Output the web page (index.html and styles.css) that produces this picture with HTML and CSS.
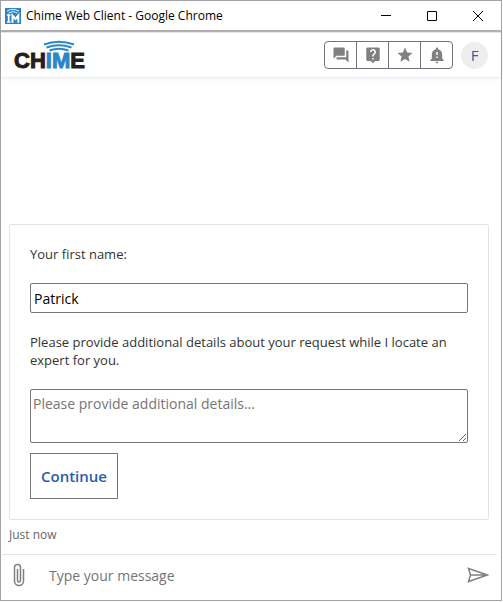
FILE: index.html
```html
<!DOCTYPE html>
<html lang="en">

<head>
    <meta charset="utf-8" />
    <meta name="viewport" content="width=device-width, initial-scale=1">
    <title>Chime Web Client</title>
    <link rel="stylesheet" href="styles.css">
</head>

<body>
    <div class="window">
        <div class="titlebar">
            <svg class="favicon" width="16" height="16" viewBox="0 0 16 16" aria-hidden="true">
                <rect width="16" height="16" fill="#2b83c6" />
                <g fill="none" stroke="#fff">
                    <path d="M2 3.2Q8 -.6 14 3.2" stroke-width=".9" />
                    <path d="M3.500 5Q8 2 12.500 5" stroke-width=".9" />
                    <path d="M2 7h3.500M3.700 7v7M2 14h3.500" stroke-width="1.700" />
                    <path d="M7.500 14.800V7.500l2.900 3.500 2.900-3.500v7.300" stroke-width="2" />
                </g>
            </svg>
            <span class="window-title">Chime Web Client - Google Chrome</span>
            <div class="window-controls">
                <button aria-label="Minimize"><svg width="12" height="12" viewBox="0 0 12 12"><path d="M1 5.500h10" /></svg></button>
                <button aria-label="Maximize"><svg width="12" height="12" viewBox="0 0 12 12"><path d="M1.500 1.500h9v9h-9z" /></svg></button>
                <button aria-label="Close"><svg width="12" height="12" viewBox="0 0 12 12"><path d="M1 1l10 10M11 1L1 11" /></svg></button>
            </div>
        </div>

        <header class="header">
            <svg class="logo" width="76" height="38" viewBox="0 0 76 38" role="img" aria-label="Chime">
                <g fill="none" stroke="#2b87c8" stroke-width="2">
                    <path d="M31 8.500Q46 3 61 8.500" />
                    <path d="M33.500 11.500Q46 7 58.500 11.500" />
                    <path d="M36.500 14.500Q46 11 55.500 14.500" />
                </g>
                <text class="logo-text" x="1" y="32">CH<tspan class="logo-accent">IM</tspan>E</text>
            </svg>

            <nav class="toolbar">
                <button aria-label="Conversations">
                    <svg width="18" height="18" viewBox="0 0 24 24"><path d="M21 6h-2v9H6v2c0 .55.45 1 1 1h11l4 4V7c0-.55-.45-1-1-1zm-4 6V3c0-.55-.45-1-1-1H3c-.55 0-1 .45-1 1v14l4-4h10c.55 0 1-.45 1-1z" /></svg>
                </button>
                <button aria-label="Help">
                    <svg width="18" height="18" viewBox="0 0 24 24"><path d="M19 2H5c-1.110 0-2 .9-2 2v14c0 1.100.89 2 2 2h4l3 3 3-3h4c1.100 0 2-.9 2-2V4c0-1.100-.9-2-2-2zm-6 16h-2v-2h2v2zm2.070-7.750l-.9.920C13.450 11.900 13 12.500 13 14h-2v-.5c0-1.100.45-2.100 1.170-2.830l1.240-1.260c.37-.36.59-.86.59-1.410 0-1.100-.9-2-2-2s-2 .9-2 2H8c0-2.210 1.790-4 4-4s4 1.790 4 4c0 .88-.36 1.680-.93 2.250z" /></svg>
                </button>
                <button aria-label="Favorites">
                    <svg width="18" height="18" viewBox="0 0 24 24"><path d="M12 17.270L18.180 21l-1.640-7.030L22 9.240l-7.190-.61L12 2 9.190 8.630 2 9.240l5.460 4.730L5.820 21z" /></svg>
                </button>
                <button aria-label="Notifications">
                    <svg width="18" height="18" viewBox="0 0 24 24"><path d="M10.010 21.010c0 1.100.88 1.990 1.990 1.990s1.990-.89 1.990-1.990h-3.980zm8.870-4.190V11c0-3.250-2.250-5.970-5.290-6.690v-.72C13.590 2.710 12.880 2 12 2s-1.590.71-1.590 1.590v.72C7.370 5.030 5.120 7.750 5.120 11v5.820L3 18.940V20h18v-1.060l-2.120-2.120zM13 16h-2v-2h2v2zm0-4h-2V8h2v4z" /></svg>
                </button>
            </nav>
            <button class="avatar" aria-label="Account">F</button>
        </header>

        <main class="chat">
            <form class="card">
                <label for="first-name">Your first name:</label>
                <input type="text" id="first-name" value="Patrick" />

                <label for="details">Please provide additional details about your request while I locate an expert for you.</label>
                <textarea id="details" placeholder="Please provide additional details..."></textarea>

                <button type="button" class="continue">Continue</button>
            </form>
            <p class="timestamp">Just now</p>
        </main>

        <footer class="composer">
            <button class="attach" aria-label="Attach a file">
                <svg width="12" height="24" viewBox="0 0 12 24"><path d="M10.500 6v12a4.500 4.500 0 0 1-9 0V4.500a3 3 0 0 1 6 0v13a1.500 1.500 0 0 1-3 0V6" /></svg>
            </button>
            <input type="text" class="message" aria-label="Message" placeholder="Type your message" />
            <button class="send" aria-label="Send">
                <svg width="22" height="16" viewBox="0 0 22 16"><path d="M1.500 1.500L20.500 8l-19 6.500L3.500 8zM3.500 8h17" /></svg>
            </button>
        </footer>
    </div>
</body>

</html>
```

FILE: styles.css
```css
:root {
    --frame-color: #a3a3a3;
    --border-color: #e4e4e4;
    --control-border-color: #767676;
    --toolbar-border-color: #6c757d;
    --text-color: #333;
    --muted-color: #757575;
    --icon-color: #808080;
    --link-color: #2a5caa;
}

* {
    box-sizing: border-box;
}

body {
    margin: 0;
    padding: 0 1px 1px 0;
    height: 100vh;
    font-family: "Open Sans", "Noto Sans", sans-serif;
    font-size: 13px;
    line-height: 18px;
    color: var(--text-color);
    background-color: #fff;
}

button,
input,
textarea {
    font-family: inherit;
    margin: 0;
}

button {
    display: flex;
    align-items: center;
    justify-content: center;
    padding: 0;
    border: 0;
    background: none;
    cursor: pointer;
}

.window {
    display: flex;
    flex-direction: column;
    height: 100%;
    border: 1px solid var(--frame-color);
}

.titlebar {
    display: flex;
    align-items: center;
    height: 31px;
    padding-left: 4px;
    border-bottom: 2px solid #b4b4b4;
    color: #000;
}

.window-title {
    margin-left: 5px;
    font-size: 12px;
}

.window-controls {
    display: flex;
    margin-left: auto;
}

.window-controls button {
    width: 46px;
    height: 28px;
}

.window-controls svg {
    fill: none;
    stroke: #000;
}

.header {
    display: flex;
    align-items: center;
    height: 45px;
    padding: 0 13px 0 12px;
    border-top: 1px solid #e6e6e6;
    box-shadow: 0 1px 4px rgba(0, 0, 0, 0.1);
}

.logo-text {
    font-family: "Liberation Sans", Arial, sans-serif;
    font-size: 22px;
    font-weight: bold;
    fill: #231f20;
    stroke: #231f20;
}

.logo-accent {
    fill: #2b87c8;
    stroke: #2b87c8;
}

.toolbar {
    display: flex;
    margin-left: auto;
    border: 1px solid var(--toolbar-border-color);
    border-radius: 4px;
}

.toolbar button {
    width: 32px;
    height: 26px;
}

.toolbar button:first-child {
    width: 31px;
}

.toolbar button + button {
    border-left: 1px solid var(--toolbar-border-color);
}

.toolbar svg {
    fill: var(--icon-color);
}

.avatar {
    width: 27px;
    height: 27px;
    margin-left: 8px;
    border-radius: 50%;
    font-size: 15px;
    color: var(--link-color);
    background-color: #eee;
}

.chat {
    display: flex;
    flex: 1;
    flex-direction: column;
    justify-content: flex-end;
    padding: 0 12px 10px 8px;
}

.card {
    display: flex;
    flex-direction: column;
    padding: 20px;
    border: 1px solid var(--border-color);
    border-radius: 2px;
}

.card input,
.card textarea {
    width: 100%;
    margin: 20px 0;
    padding: 2px 3px;
    border: 1px solid var(--control-border-color);
    border-radius: 2px;
    font-size: 14px;
    color: #000;
}

.card input {
    height: 30px;
}

.card textarea {
    height: 54px;
    margin-bottom: 10px;
    padding: 4px 2px;
}

::placeholder {
    color: var(--muted-color);
}

.continue {
    align-self: flex-start;
    width: 88px;
    height: 46px;
    border: 1px solid var(--control-border-color);
    font-size: 15px;
    font-weight: 600;
    color: var(--link-color);
}

.timestamp {
    margin: 6px 0 0;
    font-size: 12px;
    color: #666;
}

.composer {
    display: flex;
    align-items: center;
    height: 46px;
    margin: 0 4px 0 1px;
    padding: 0 8px 5px 11px;
    border-top: 1px solid var(--border-color);
}

.composer svg {
    fill: none;
    stroke: var(--icon-color);
    stroke-width: 1.5;
}

.message {
    flex: 1;
    min-width: 0;
    margin-left: 24px;
    padding: 0;
    border: 0;
    outline: none;
    font-size: 14px;
}
```
